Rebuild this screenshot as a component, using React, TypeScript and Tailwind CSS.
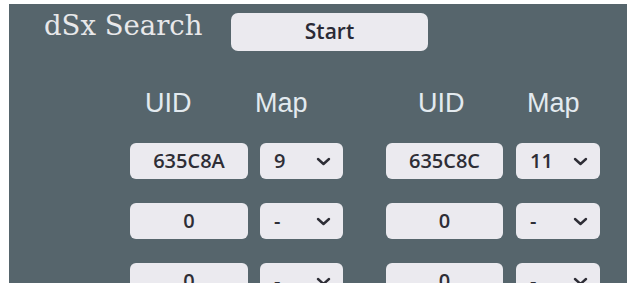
import React from "react";

type Row = {
  uid: string;
  map: string;
};

const leftRows: Row[] = [
  { uid: "635C8A", map: "9" },
  { uid: "0", map: "-" },
  { uid: "0", map: "-" },
];

const rightRows: Row[] = [
  { uid: "635C8C", map: "11" },
  { uid: "0", map: "-" },
  { uid: "0", map: "-" },
];

function Chevron() {
  return (
    <svg width="15" height="9" viewBox="0 0 15 9" className="shrink-0">
      <polyline
        points="2,2 7.5,7 13,2"
        fill="none"
        stroke="#2e2e36"
        strokeWidth="2.4"
        strokeLinecap="round"
        strokeLinejoin="round"
      />
    </svg>
  );
}

function UidBox({ value, w }: { value: string; w: string }) {
  return (
    <div
      className={`${w} h-[36px] rounded-[6px] bg-[#ebeaef] flex items-center justify-center text-[20px] text-[#2e2e36] font-semibold`}
      style={{ fontFamily: '"Open Sans", sans-serif' }}
    >
      {value}
    </div>
  );
}

function MapSelect({ value, w }: { value: string; w: string }) {
  return (
    <div
      className={`${w} h-[36px] rounded-[6px] bg-[#ebeaef] flex items-center justify-between pl-[14px] pr-[12px] text-[20px] text-[#2e2e36] font-semibold`}
      style={{ fontFamily: '"Open Sans", sans-serif' }}
    >
      <span>{value}</span>
      <Chevron />
    </div>
  );
}

export default function App() {
  return (
    <div className="w-[635px] h-[291px] bg-white overflow-hidden">
      <div className="ml-[9px] mt-[4px] w-[618px] h-[279px] bg-[#56656c] overflow-hidden flex flex-col">
        {/* title row */}
        <div className="flex items-start pt-[6px]">
          <div
            className="ml-[35px] w-[187px] text-[27.5px] leading-[31px] text-[#e8e8ea]"
            style={{ fontFamily: '"DejaVu Serif", serif' }}
          >
            dSx Search
          </div>
          <button
            className="mt-[3px] w-[197px] h-[38px] rounded-[7px] bg-[#ebeaef] text-[21px] font-semibold text-[#2a2a36] flex items-center justify-center"
            style={{ fontFamily: '"Open Sans", sans-serif' }}
          >
            Start
          </button>
        </div>

        {/* headers */}
        <div
          className="flex mt-[37px] pl-[136px] h-[31px] text-[27px] leading-[31px] text-[#e3eaef]"
          style={{ fontFamily: '"Liberation Sans", Arial, sans-serif' }}
        >
          <span className="w-[110px]">UID</span>
          <span className="w-[163px]">Map</span>
          <span className="w-[109px]">UID</span>
          <span>Map</span>
        </div>

        {/* rows */}
        <div className="flex flex-col gap-[24px] mt-[24px] pl-[121px]">
          {leftRows.map((row, index) => (
            <div key={index} className="flex">
              <UidBox value={row.uid} w="w-[118px]" />
              <div className="ml-[12px]">
                <MapSelect value={row.map} w="w-[83px]" />
              </div>
              <div className="ml-[43px]">
                <UidBox value={rightRows[index].uid} w="w-[117px]" />
              </div>
              <div className="ml-[13px]">
                <MapSelect value={rightRows[index].map} w="w-[84px]" />
              </div>
            </div>
          ))}
        </div>
      </div>
    </div>
  );
}
